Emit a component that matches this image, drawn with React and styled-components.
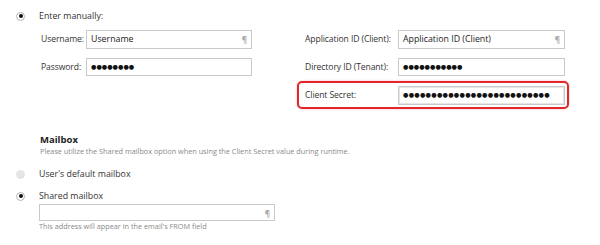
import React from "react";
import styled, { createGlobalStyle } from "styled-components";

const Global = createGlobalStyle`
  html, body { margin: 0; padding: 0; background: #fff; }
  body { font-family: "Open Sans", "Noto Sans", sans-serif; color: #333; }
  #root { width: 600px; height: 245px; overflow: hidden; }
`;

const Page = styled.div`
  padding: 9px 0 0 16px;
  box-sizing: border-box;
  width: 600px;
  height: 245px;
`;

const RadioRow = styled.div`
  display: flex;
  align-items: center;
  gap: 14px;
  height: 14px;
  font-size: 8.8px;
  color: #333;
`;

const Radio = styled.span`
  width: 9px;
  height: 9px;
  flex: none;
  border-radius: 50%;
  box-sizing: border-box;
  border: 1px solid ${(p) => (p.$checked ? "#b5b5b5" : "#e2e2e2")};
  background: ${(p) => (p.$checked ? "#fff" : "#e6e6e6")};
  display: flex;
  align-items: center;
  justify-content: center;
  &::after {
    content: "";
    display: ${(p) => (p.$checked ? "block" : "none")};
    width: 4px;
    height: 4px;
    border-radius: 50%;
    background: #111;
  }
`;

const Grid = styled.div`
  display: flex;
  margin: 2px 0 0 23px;
  gap: 47px;
`;

const Column = styled.div`
  display: flex;
  flex-direction: column;
`;

const Row = styled.div`
  display: flex;
  align-items: center;
  height: 28px;
  box-sizing: border-box;
  width: ${(p) => p.$width}px;
  padding-left: ${(p) => p.$pad}px;
  border: 2px solid ${(p) => (p.$highlight ? "#e3262a" : "transparent")};
  border-radius: 5px;
  box-shadow: ${(p) => (p.$highlight ? "0 0 2px rgba(227,38,42,0.4)" : "none")};
`;

const Label = styled.span`
  width: ${(p) => p.$width}px;
  flex: none;
  font-size: 8.6px;
  letter-spacing: -0.1px;
  color: #333;
  white-space: nowrap;
`;

const Input = styled.div`
  position: relative;
  width: ${(p) => p.$width}px;
  height: ${(p) => p.$height || 18}px;
  flex: none;
  box-sizing: border-box;
  border: 1px solid #c9c9c9;
  background: #fff;
  display: flex;
  align-items: center;
  padding-left: 4px;
  font-size: 8.8px;
  color: #222;
  ${(p) => (p.$shadow ? "box-shadow: inset 0 0 0 1px #e6e6e6;" : "")}
`;

const Dots = styled.span`
  font-family: "DejaVu Sans", sans-serif;
  font-size: 6.2px;
  letter-spacing: ${(p) => p.$spacing || 0}px;
  line-height: 1;
  color: #111;
`;

const Pilcrow = styled.span`
  position: absolute;
  right: 4px;
  top: 50%;
  transform: translateY(-50%);
  font-size: 8px;
  color: #aaa;
  font-weight: 700;
`;

const Heading = styled.div`
  margin: 24px 0 0 24px;
  font-size: 9.5px;
  font-weight: 700;
  color: #222;
  height: 13px;
  line-height: 13px;
`;

const Desc = styled.div`
  margin-left: 24px;
  font-size: 7.3px;
  color: #8a8a8a;
  height: 10px;
  line-height: 10px;
`;

const MailRadios = styled.div`
  display: flex;
  flex-direction: column;
  gap: 8px;
  margin-top: 11px;
`;

const Indent = styled.div`
  margin-left: 23px;
  margin-top: 1px;
  display: flex;
  flex-direction: column;
`;

const Help = styled.div`
  font-size: 7.3px;
  color: #8a8a8a;
  line-height: 11px;
`;

const dots = (n) => "●".repeat(n);

export default function App() {
  return (
    <>
      <Global />
      <Page>
        <RadioRow>
          <Radio $checked />
          <span>Enter manually:</span>
        </RadioRow>
        <Grid>
          <Column>
            <Row $width={211} $pad={0}>
              <Label $width={45}>Username:</Label>
              <Input $width={166} $height={19}>
                Username
                <Pilcrow>¶</Pilcrow>
              </Input>
            </Row>
            <Row $width={211} $pad={0}>
              <Label $width={45}>Password:</Label>
              <Input $width={166}>
                <Dots>{dots(8)}</Dots>
              </Input>
            </Row>
          </Column>
          <Column>
            <Row $width={272} $pad={6}>
              <Label $width={93}>Application ID (Client):</Label>
              <Input $width={167} $height={19}>
                Application ID (Client)
                <Pilcrow>¶</Pilcrow>
              </Input>
            </Row>
            <Row $width={272} $pad={6}>
              <Label $width={93}>Directory ID (Tenant):</Label>
              <Input $width={167}>
                <Dots>{dots(11)}</Dots>
              </Input>
            </Row>
            <Row $width={272} $pad={6} $highlight>
              <Label $width={93}>Client Secret:</Label>
              <Input $width={167} $height={19} $shadow>
                <Dots $spacing={0.25}>{dots(26)}</Dots>
              </Input>
            </Row>
          </Column>
        </Grid>
        <Heading>Mailbox</Heading>
        <Desc>
          Please utilize the Shared mailbox option when using the Client Secret
          value during runtime.
        </Desc>
        <MailRadios>
          <RadioRow>
            <Radio />
            <span>User's default mailbox</span>
          </RadioRow>
          <div>
            <RadioRow>
              <Radio $checked />
              <span>Shared mailbox</span>
            </RadioRow>
            <Indent>
              <Input $width={236} $height={17}>
                <Pilcrow>¶</Pilcrow>
              </Input>
              <Help>This address will appear in the email's FROM field</Help>
            </Indent>
          </div>
        </MailRadios>
      </Page>
    </>
  );
}
